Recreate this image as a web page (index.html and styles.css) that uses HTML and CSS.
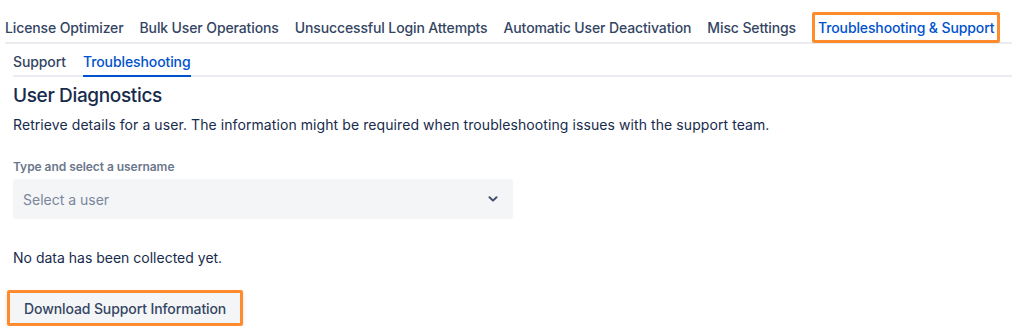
FILE: index.html
```html
<!DOCTYPE html>
<html lang="en">

<head>
    <meta charset="UTF-8">
    <meta name="viewport" content="width=device-width, initial-scale=1.0">
    <title>Troubleshooting &amp; Support</title>
    <link rel="stylesheet" href="styles.css">
</head>

<body>
    <nav class="tabs">
        <a class="tab">License Optimizer</a>
        <a class="tab">Bulk User Operations</a>
        <a class="tab">Unsuccessful Login Attempts</a>
        <a class="tab">Automatic User Deactivation</a>
        <a class="tab">Misc Settings</a>
        <a class="tab active marked">Troubleshooting &amp; Support</a>
    </nav>

    <div class="page">
        <nav class="subtabs">
            <a class="subtab">Support</a>
            <a class="subtab active">Troubleshooting</a>
        </nav>

        <h2>User Diagnostics</h2>
        <p class="intro">Retrieve details for a user. The information might be required when troubleshooting issues with the support team.</p>

        <label class="field-label">Type and select a username</label>
        <div class="select">
            <span>Select a user</span>
            <svg width="10" height="6" viewBox="0 0 10 6"><path d="M1.5 1.2 L5 4.6 L8.5 1.2" fill="none" stroke="#42526e" stroke-width="2" stroke-linecap="round" stroke-linejoin="round"/></svg>
        </div>

        <p class="empty">No data has been collected yet.</p>

        <div class="marked-btn">
            <button class="btn">Download Support Information</button>
        </div>
    </div>
</body>

</html>
```

FILE: styles.css
```css
* {
    margin: 0;
    padding: 0;
    box-sizing: border-box;
    font-family: Inter, "Noto Sans", "Liberation Sans", sans-serif;
}

body {
    background: white;
    color: #172b4d;
    font-size: 14px;
}

.tabs {
    display: flex;
    margin: 12px 0 0 5px;
    border-bottom: 2px solid #ebecf0;
    height: 32px;
}

.tab {
    color: #344563;
    font-weight: 500;
    letter-spacing: -0.12px;
    padding: 2px 8px 0;
    line-height: 28px;
    white-space: nowrap;
}

.tab:first-child {
    padding-left: 0;
}

.tab.active {
    color: #0052cc;
}

.tab.marked {
    border: 3px solid #ff8b2c;
    border-radius: 2px;
    line-height: 24px;
    height: 31px;
    padding: 1px 3px 0;
    margin-left: 8px;
}

.page {
    padding: 0 0 0 13px;
}

.subtabs {
    display: flex;
    gap: 17px;
    border-bottom: 2px solid #ebecf0;
    height: 33px;
    padding-top: 7px;
}

.subtab {
    color: #344563;
    font-weight: 500;
    letter-spacing: -0.1px;
    line-height: 22px;
    height: 26px;
    margin-bottom: -2px;
    border-bottom: 2px solid transparent;
}

.subtab.active {
    color: #0052cc;
    border-bottom-color: #0052cc;
}

h2 {
    font-size: 19px;
    font-weight: 500;
    letter-spacing: -0.35px;
    color: #172b4d;
    margin-top: 7px;
    line-height: 24px;
}

.intro {
    margin-top: 7px;
    line-height: 20px;
    letter-spacing: 0.08px;
}

.field-label {
    display: block;
    margin-top: 24px;
    font-size: 12px;
    font-weight: 600;
    color: #6b778c;
    line-height: 16px;
    letter-spacing: -0.05px;
}

.select {
    width: 500px;
    height: 40px;
    margin-top: 4px;
    background: #f4f5f7;
    border-radius: 3px;
    display: flex;
    align-items: center;
    justify-content: space-between;
    padding: 0 15px 0 10px;
    color: #7a869a;
}

.empty {
    margin-top: 29px;
    line-height: 20px;
}

.marked-btn {
    display: inline-block;
    margin: 22px 0 0 -6px;
    border: 3px solid #ff8b2c;
    border-radius: 2px;
    box-shadow: 0 2px 4px rgba(0, 0, 0, 0.12);
}

.btn {
    display: block;
    background: #f4f5f7;
    border: none;
    border-radius: 3px;
    color: #344563;
    font-size: 14px;
    font-weight: 500;
    letter-spacing: -0.1px;
    height: 30px;
    padding: 0 14px;
}
```
